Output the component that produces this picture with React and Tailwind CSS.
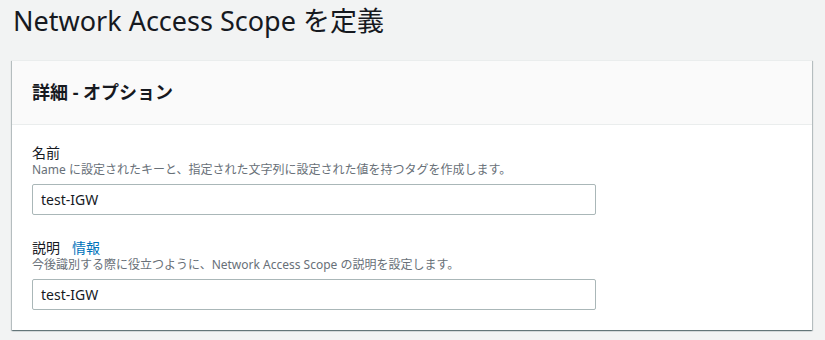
const FONT = "font-['Noto_Sans','Noto_Sans_CJK_JP',sans-serif]"

const Field = ({ label, info, hint, value }) => (
  <div>
    <div className="flex items-center gap-3 text-[14px] leading-[18px] text-[#16191f]">
      <span>{label}</span>
      {info ? <span className="text-[#0073bb]">{info}</span> : null}
    </div>
    <p className="text-[12px] leading-[16px] text-[#687078]">{hint}</p>
    <div className="mt-1.5 flex h-[31px] w-[564px] items-center rounded-[2px] border border-[#aab7b8] bg-white px-2 text-[14px] text-[#16191f]">
      {value}
    </div>
  </div>
)

export default function App() {
  return (
    <div className={`${FONT} min-h-[340px] w-[825px] bg-[#f2f3f3] pl-3`}>
      <div className="h-[60px]">
        <h1 className="pt-[3px] pl-px text-[27px] leading-[36px] text-[#16191f]">
          Network Access Scope を定義
        </h1>
      </div>

      <div className="w-[800px] border-t border-[#eaeded] bg-white shadow-[0_1px_1px_0_rgba(0,28,36,0.35),1px_1px_1px_0_rgba(0,28,36,0.2),-1px_1px_1px_0_rgba(0,28,36,0.2)]">
        <div className="flex h-[64px] items-center border-b border-[#eaeded] bg-[#fafafa] px-5">
          <h2 className="text-[18px] font-bold text-[#16191f]">詳細 - オプション</h2>
        </div>

        <div className="flex flex-col gap-6 px-5 pt-[19px] pb-5">
          <Field
            label="名前"
            hint="Name に設定されたキーと、指定された文字列に設定された値を持つタグを作成します。"
            value="test-IGW"
          />
          <Field
            label="説明"
            info="情報"
            hint="今後識別する際に役立つように、Network Access Scope の説明を設定します。"
            value="test-IGW"
          />
        </div>
      </div>
    </div>
  )
}
